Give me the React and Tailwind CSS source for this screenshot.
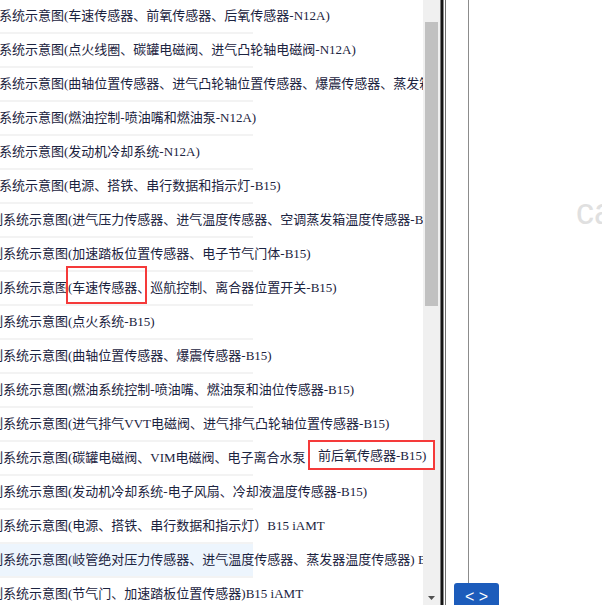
const rows = [
  { t: "系统示意图(车速传感器、前氧传感器、后氧传感器-N12A)", cut: false },
  { t: "系统示意图(点火线圈、碳罐电磁阀、进气凸轮轴电磁阀-N12A)", cut: false },
  { t: "系统示意图(曲轴位置传感器、进气凸轮轴位置传感器、爆震传感器、蒸发箱温度传感器-N12A)", cut: false },
  { t: "系统示意图(燃油控制-喷油嘴和燃油泵-N12A)", cut: false },
  { t: "系统示意图(发动机冷却系统-N12A)", cut: false },
  { t: "系统示意图(电源、搭铁、串行数据和指示灯-B15)", cut: false },
  { t: "制系统示意图(进气压力传感器、进气温度传感器、空调蒸发箱温度传感器-B15)", cut: true },
  { t: "制系统示意图(加速踏板位置传感器、电子节气门体-B15)", cut: true },
  { t: "制系统示意图(车速传感器、巡航控制、离合器位置开关-B15)", cut: true },
  { t: "制系统示意图(点火系统-B15)", cut: true },
  { t: "制系统示意图(曲轴位置传感器、爆震传感器-B15)", cut: true },
  { t: "制系统示意图(燃油系统控制-喷油嘴、燃油泵和油位传感器-B15)", cut: true },
  { t: "制系统示意图(进气排气VVT电磁阀、进气排气凸轮轴位置传感器-B15)", cut: true },
  { t: "制系统示意图(碳罐电磁阀、VIM电磁阀、电子离合水泵", cut: true },
  { t: "制系统示意图(发动机冷却系统-电子风扇、冷却液温度传感器-B15)", cut: true },
  { t: "制系统示意图(电源、搭铁、串行数据和指示灯）B15 iAMT", cut: true },
  { t: "制系统示意图(岐管绝对压力传感器、进气温度传感器、蒸发器温度传感器) B15 iAMT", cut: true },
  { t: "制系统示意图(节气门、加速踏板位置传感器)B15 iAMT", cut: true },
];

export default function App() {
  return (
    <div className="relative flex w-[602px] h-[605px] overflow-hidden bg-white">
      {/* list */}
      <div className="w-[423px] h-full overflow-hidden font-['Liberation_Serif','Noto_Sans_CJK_SC',serif] text-[13px] leading-[16px] text-[#1b2340]">
        {rows.map((r, i) => (
          <div
            key={i}
            className={
              "flex h-[34px] w-[253px] items-center border-b-2 border-[#f3f3f3] whitespace-nowrap " +
              (i === 16 ? "bg-[#edf5fd]" : "")
            }
          >
            <span className={r.cut ? "ml-[-10px]" : "ml-[-1px]"}>{r.t}</span>
          </div>
        ))}
      </div>

      {/* scrollbar */}
      <div className="flex h-full w-[17px] flex-col bg-[#f0f0f0]">
        <div className="h-[22px]" />
        <div className="ml-[2px] h-[284px] w-[13px] bg-[#c1c1c1]" />
        <div className="flex-1" />
        <div className="flex h-[17px] items-start justify-center pt-[8px]">
          <svg width="7" height="4" viewBox="0 0 7 4">
            <path d="M0 0 L7 0 L3.5 4 Z" fill="#505050" />
          </svg>
        </div>
      </div>

      {/* divider */}
      <div className="flex h-full">
        <div className="w-px bg-[#7a7a7a]" />
        <div className="w-[2px] bg-[#151515]" />
        <div className="w-px bg-[#8a8a8a]" />
        <div className="w-px bg-white" />
        <div className="w-px bg-[#6e6e6e]" />
      </div>

      {/* right panel */}
      <div className="relative flex h-full flex-1 flex-col">
        <div className="ml-[22px] w-px flex-1 bg-[#8c8c8c]" />
        <div className="ml-[8px] flex h-[22px] w-[45px] items-end justify-center rounded-t-[3px] bg-[#1c5cbb] font-['Liberation_Sans',sans-serif] text-[16px] leading-[16px] text-white">
          <span>&lt; &gt;</span>
        </div>
        <div className="absolute left-[130px] top-[194px] whitespace-nowrap font-['Liberation_Sans',sans-serif] text-[36px] leading-none text-[#e0e0e0]">
          ca
        </div>
      </div>

      {/* annotation boxes */}
      <div className="absolute left-[66px] top-[266px] h-[38px] w-[81px] border-2 border-[#f53a3a]" />
      <div className="absolute left-[308px] top-[440px] flex h-[30px] w-[127px] items-center overflow-hidden whitespace-nowrap border-2 border-[#f53a3a] bg-white pl-[8px] font-['Liberation_Serif','Noto_Sans_CJK_SC',serif] text-[13px] leading-[16px] text-[#1b2340]">
        <span className="mt-[2px]">前后氧传感器-B15)</span>
      </div>
    </div>
  );
}
